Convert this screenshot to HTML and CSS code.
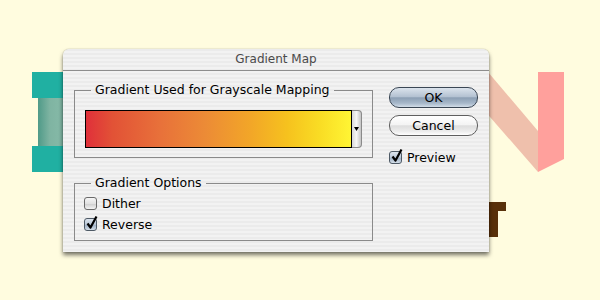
FILE: index.html
```html
<!DOCTYPE html>
<html>
<head>
<meta charset="utf-8">
<link rel="stylesheet" href="styles.css">
</head>
<body>
<div class="desk">
  <div class="art">
    <div class="teal teal-top"></div>
    <div class="teal-mid"></div>
    <div class="teal teal-bot"></div>
    <svg class="letter-n" width="600" height="300" viewBox="0 0 600 300">
      <polygon points="470,72 488,72 538,131 538,172 470,94" fill="#efc0ac"/>
      <polygon points="538,72 564,72 564,159 538,172" fill="#ffa09c"/>
      <rect x="487" y="112" width="2" height="61" fill="#d86a68"/>
    </svg>
    <div class="t-bar"></div>
    <div class="t-stem"></div>
  </div>
  <div class="dialog">
    <div class="titlebar">Gradient Map</div>
    <div class="content">
      <div class="left">
        <fieldset class="group g1">
          <legend>Gradient Used for Grayscale Mapping</legend>
          <div class="picker">
            <div class="grad"></div>
            <div class="drop"><svg width="5" height="4" viewBox="0 0 5 4"><polygon points="0,0 5,0 2.5,4" fill="#000"/></svg></div>
          </div>
        </fieldset>
        <fieldset class="group g2">
          <legend>Gradient Options</legend>
          <div class="check"><span class="box"></span><span>Dither</span></div>
          <div class="check"><span class="box on"><svg class="tick" width="14" height="15" viewBox="0 0 14 15"><path d="M2.5 8.5 L5.5 12.5 L11.5 1.5" fill="none" stroke="#000" stroke-width="2.2" stroke-linejoin="round"/></svg></span><span>Reverse</span></div>
        </fieldset>
      </div>
      <div class="right">
        <div class="btn ok">OK</div>
        <div class="btn cancel">Cancel</div>
        <div class="check pv"><span class="box on"><svg class="tick" width="14" height="15" viewBox="0 0 14 15"><path d="M2.5 8.5 L5.5 12.5 L11.5 1.5" fill="none" stroke="#000" stroke-width="2.2" stroke-linejoin="round"/></svg></span><span>Preview</span></div>
      </div>
    </div>
  </div>
</div>
</body>
</html>
```
FILE: styles.css
```css
html, body {
  margin: 0;
  padding: 0;
}
body {
  width: 600px;
  height: 300px;
  background: #fffcdf;
  font-family: "DejaVu Sans", "Liberation Sans", sans-serif;
  overflow: hidden;
}
.desk {
  position: relative;
  width: 600px;
  height: 300px;
}
.art {
  position: absolute;
  inset: 0;
}
.teal {
  position: absolute;
  left: 32px;
  width: 40px;
  height: 26px;
  background: #20b0a2;
}
.teal-top { top: 72px; }
.teal-bot { top: 146px; }
.teal-mid {
  position: absolute;
  left: 38px;
  top: 98px;
  width: 34px;
  height: 48px;
  background: linear-gradient(90deg, #4f9a88 0%, #7fb4a2 35%, #84b8a6 60%, #6aa896 100%);
}
.letter-n {
  position: absolute;
  left: 0;
  top: 0;
}
.t-bar {
  position: absolute;
  left: 470px;
  top: 202px;
  width: 36px;
  height: 9px;
  background: #58300a;
}
.t-stem {
  position: absolute;
  left: 470px;
  top: 202px;
  width: 28px;
  height: 35px;
  background: #58300a;
}
.dialog {
  position: absolute;
  left: 63px;
  top: 49px;
  width: 426px;
  height: 203px;
  border-radius: 6px 6px 0 0;
  background: repeating-linear-gradient(180deg, #ebebeb 0 2px, #f2f2f2 2px 4px);
  box-shadow: 0 3px 4px rgba(0,0,0,0.55), 0 0 1px rgba(0,0,0,0.45);
  display: flex;
  flex-direction: column;
}
.titlebar {
  height: 21px;
  border-bottom: 1px solid #8d8d8d;
  text-align: center;
  font-size: 12px;
  line-height: 21px;
  color: #4a4a4a;
}
.content {
  display: flex;
  gap: 16px;
  padding: 11px 11px 0 11px;
}
.left {
  width: 299px;
  display: flex;
  flex-direction: column;
}
.group {
  margin: 0;
  border: 1px solid #8a8a8a;
  min-width: 0;
}
.group legend {
  font-size: 12.5px;
  line-height: 16px;
  padding: 0 4px;
  color: #000;
}
.g1 {
  padding: 12px 10px 9px 10px;
}
.g1 legend {
  margin-left: 6px;
}
.g2 {
  margin-top: 17px;
  padding: 2px 9px 5px 9px;
}
.g2 legend {
  margin-left: 7px;
}
.picker {
  display: flex;
  height: 38px;
}
.grad {
  width: 265px;
  border: 1px solid #000;
  background: linear-gradient(90deg, #e0303a 0%, #e25236 10%, #e8713a 28%, #ec8b36 45%, #f2a628 62%, #f6c21e 76%, #f9dc24 88%, #fff534 100%);
}
.drop {
  width: 9px;
  border: 1px solid #8a8a8a;
  border-left: none;
  border-radius: 0 4px 4px 0;
  background: linear-gradient(90deg, #d8d8d8, #f6f6f6 50%, #c4c4c4);
  display: flex;
  align-items: center;
  justify-content: center;
}
.check {
  display: flex;
  align-items: center;
  gap: 5px;
  height: 21px;
  font-size: 12.5px;
  color: #000;
}
.box {
  position: relative;
  width: 11px;
  height: 11px;
  border: 1px solid #6a6a6a;
  border-radius: 3px;
  background: linear-gradient(180deg, #f6f6f6, #e2e2e2 50%, #cfcfcf 55%, #f4f4f4);
  flex: none;
}
.box.on {
  background: linear-gradient(180deg, #dde5ee, #b8c6d6 50%, #9fb1c6 55%, #d4dee8);
  border-color: #4e5a66;
}
.tick {
  position: absolute;
  left: 0px;
  top: -4px;
}
.right {
  width: 89px;
  margin-top: 5px;
  display: flex;
  flex-direction: column;
}
.btn {
  height: 19px;
  border-radius: 10px;
  text-align: center;
  font-size: 12.5px;
  line-height: 19px;
  color: #000;
}
.ok {
  border: 1px solid #3a4654;
  background: linear-gradient(180deg, #dbe3ec 0%, #b4c2d2 45%, #8c9fb4 52%, #a7b8ca 80%, #d2dde8 100%);
}
.cancel {
  margin-top: 7px;
  border: 1px solid #5f5f5f;
  background: linear-gradient(180deg, #ffffff 0%, #f4f4f4 45%, #dedede 52%, #ececec 80%, #ffffff 100%);
}
.pv {
  margin-top: 11px;
}
```
